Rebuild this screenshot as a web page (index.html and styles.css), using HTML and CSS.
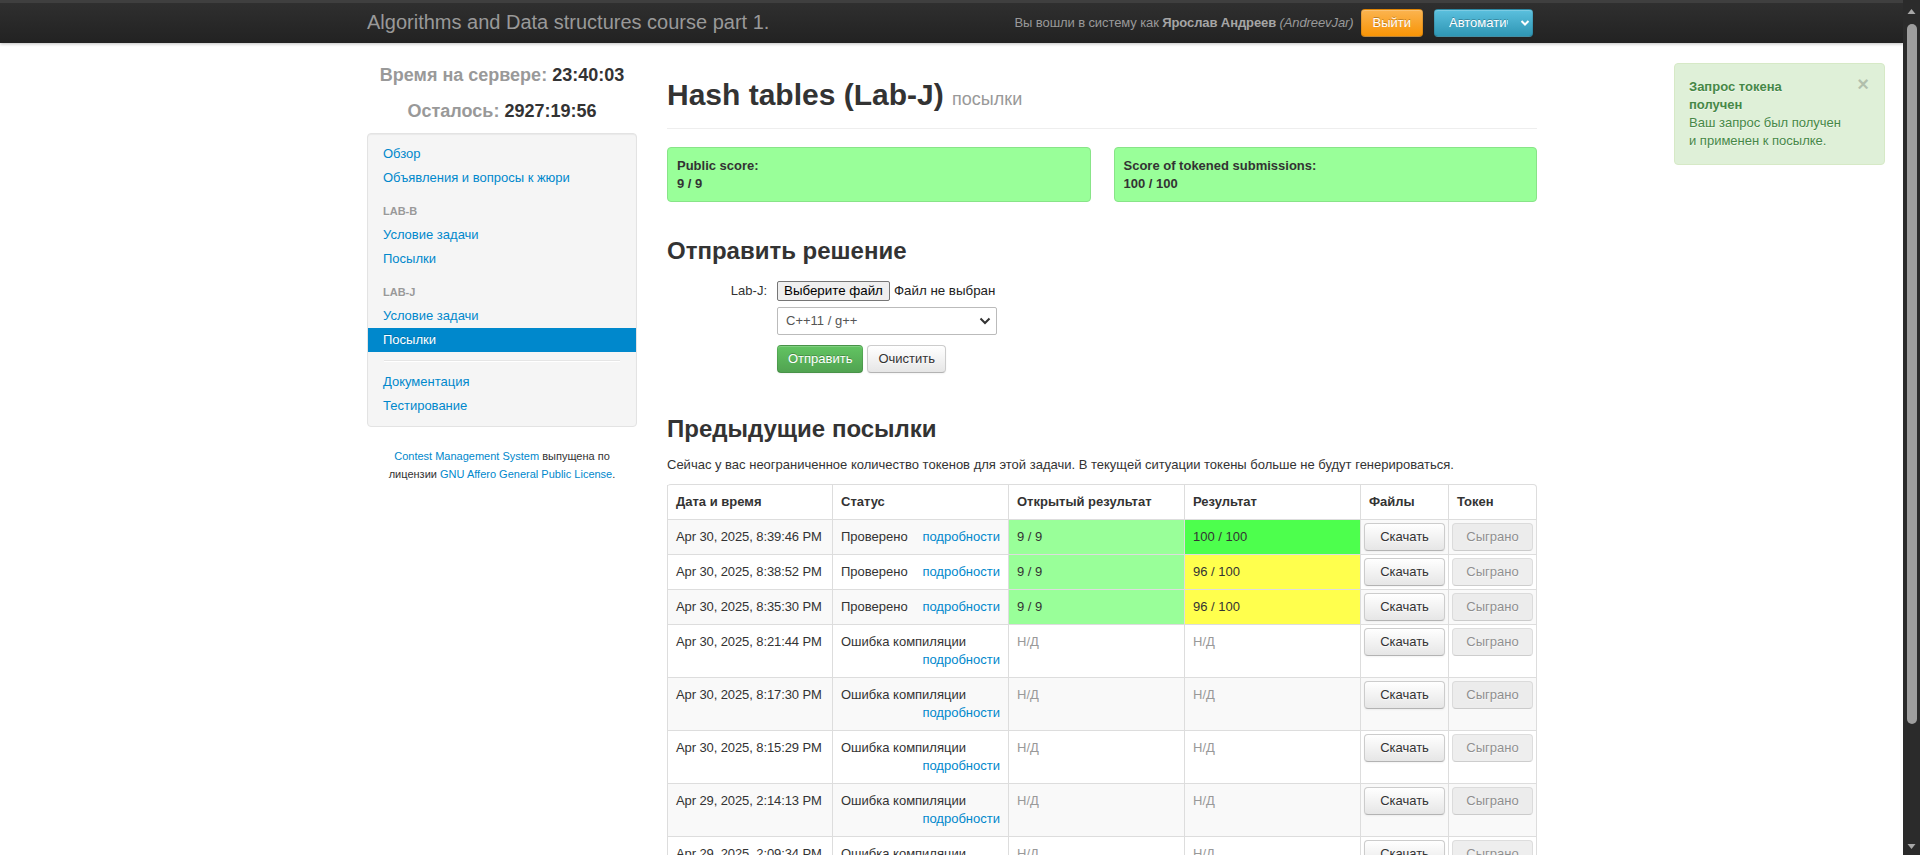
FILE: index.html
```html
<!DOCTYPE html>
<html lang="ru">
<head>
<meta charset="utf-8">
<title>Hash tables (Lab-J) посылки</title>
<link rel="stylesheet" href="styles.css">
</head>
<body>
<div class="page">
  <div class="navbar">
    <div class="nav-inner">
      <div class="brand">Algorithms and Data structures course part 1.</div>
      <div class="user">
        <span class="navtext">Вы вошли в систему как <b>Ярослав Андреев</b> <i>(AndreevJar)</i></span>
        <span class="btn btn-warning">Выйти</span>
        <span class="btn btn-info lang"><span class="lang-text">Автоматически</span><svg class="chev" width="10" height="8" viewBox="0 0 10 8"><polyline points="1.5,2 5,5.5 8.5,2" fill="none" stroke="#fff" stroke-width="2"/></svg></span>
      </div>
    </div>
  </div>

  <div class="container">
    <div class="sidebar">
      <div class="clock">Время на сервере: <span>23:40:03</span></div>
      <div class="clock">Осталось: <span>2927:19:56</span></div>
      <div class="well">
        <ul class="nav-list">
          <li><a href="#">Обзор</a></li>
          <li><a href="#">Объявления и вопросы к жюри</a></li>
          <li class="nav-header">Lab-B</li>
          <li><a href="#">Условие задачи</a></li>
          <li><a href="#">Посылки</a></li>
          <li class="nav-header">Lab-J</li>
          <li><a href="#">Условие задачи</a></li>
          <li class="active"><a href="#">Посылки</a></li>
          <li class="divider"></li>
          <li><a href="#">Документация</a></li>
          <li><a href="#">Тестирование</a></li>
        </ul>
      </div>
      <div class="copyright"><a href="#">Contest Management System</a> выпущена по лицензии <a href="#">GNU Affero General Public License</a>.</div>
    </div>

    <div class="main">
      <h1 class="title">Hash tables (Lab-J) <small>посылки</small></h1>
      <div class="scores">
        <div class="score"><b>Public score:</b><br><b>9 / 9</b></div>
        <div class="score"><b>Score of tokened submissions:</b><br><b>100 / 100</b></div>
      </div>

      <h2 class="submit-h">Отправить решение</h2>
      <div class="form">
        <div class="frow">
          <label class="flabel">Lab-J:</label>
          <span class="filebtn">Выберите файл</span><span class="filetext">Файл не выбран</span>
        </div>
        <div class="controls">
          <div class="select"><span>C++11 / g++</span><svg class="sel-chev" width="12" height="8" viewBox="0 0 12 8"><polyline points="1.5,1.5 6,6 10.5,1.5" fill="none" stroke="#333" stroke-width="2"/></svg></div>
          <div class="actions">
            <span class="btn btn-success">Отправить</span>
            <span class="btn">Очистить</span>
          </div>
        </div>
      </div>

      <h2 class="prev-h">Предыдущие посылки</h2>
      <p class="note">Сейчас у вас неограниченное количество токенов для этой задачи. В текущей ситуации токены больше не будут генерироваться.</p>

      <table class="subs">
        <thead>
          <tr>
            <th class="c-date">Дата и время</th>
            <th class="c-status">Статус</th>
            <th class="c-pub">Открытый результат</th>
            <th class="c-res">Результат</th>
            <th class="c-files">Файлы</th>
            <th class="c-token">Токен</th>
          </tr>
        </thead>
        <tbody>
          <tr>
            <td class="date">Apr 30, 2025, 8:39:46 PM</td>
            <td>Проверено <a class="det" href="#">подробности</a></td>
            <td class="pub">9 / 9</td>
            <td class="full">100 / 100</td>
            <td class="bc"><span class="btn block">Скачать</span></td>
            <td class="bc"><span class="btn block disabled">Сыграно</span></td>
          </tr>
          <tr>
            <td class="date">Apr 30, 2025, 8:38:52 PM</td>
            <td>Проверено <a class="det" href="#">подробности</a></td>
            <td class="pub">9 / 9</td>
            <td class="part">96 / 100</td>
            <td class="bc"><span class="btn block">Скачать</span></td>
            <td class="bc"><span class="btn block disabled">Сыграно</span></td>
          </tr>
          <tr>
            <td class="date">Apr 30, 2025, 8:35:30 PM</td>
            <td>Проверено <a class="det" href="#">подробности</a></td>
            <td class="pub">9 / 9</td>
            <td class="part">96 / 100</td>
            <td class="bc"><span class="btn block">Скачать</span></td>
            <td class="bc"><span class="btn block disabled">Сыграно</span></td>
          </tr>
          <tr>
            <td class="date">Apr 30, 2025, 8:21:44 PM</td>
            <td>Ошибка компиляции <a class="det" href="#">подробности</a></td>
            <td class="na">Н/Д</td>
            <td class="na">Н/Д</td>
            <td class="bc"><span class="btn block">Скачать</span></td>
            <td class="bc"><span class="btn block disabled">Сыграно</span></td>
          </tr>
          <tr>
            <td class="date">Apr 30, 2025, 8:17:30 PM</td>
            <td>Ошибка компиляции <a class="det" href="#">подробности</a></td>
            <td class="na">Н/Д</td>
            <td class="na">Н/Д</td>
            <td class="bc"><span class="btn block">Скачать</span></td>
            <td class="bc"><span class="btn block disabled">Сыграно</span></td>
          </tr>
          <tr>
            <td class="date">Apr 30, 2025, 8:15:29 PM</td>
            <td>Ошибка компиляции <a class="det" href="#">подробности</a></td>
            <td class="na">Н/Д</td>
            <td class="na">Н/Д</td>
            <td class="bc"><span class="btn block">Скачать</span></td>
            <td class="bc"><span class="btn block disabled">Сыграно</span></td>
          </tr>
          <tr>
            <td class="date">Apr 29, 2025, 2:14:13 PM</td>
            <td>Ошибка компиляции <a class="det" href="#">подробности</a></td>
            <td class="na">Н/Д</td>
            <td class="na">Н/Д</td>
            <td class="bc"><span class="btn block">Скачать</span></td>
            <td class="bc"><span class="btn block disabled">Сыграно</span></td>
          </tr>
          <tr>
            <td class="date">Apr 29, 2025, 2:09:34 PM</td>
            <td>Ошибка компиляции <a class="det" href="#">подробности</a></td>
            <td class="na">Н/Д</td>
            <td class="na">Н/Д</td>
            <td class="bc"><span class="btn block">Скачать</span></td>
            <td class="bc"><span class="btn block disabled">Сыграно</span></td>
          </tr>
        </tbody>
      </table>
    </div>
  </div>
</div>

<div class="notif">
  <span class="close">×</span>
  <b>Запрос токена<br>получен</b><br>
  Ваш запрос был получен и применен к посылке.
</div>

<div class="scrollbar">
  <svg class="sb-up" width="17" height="17" viewBox="0 0 17 17"><polygon points="4.5,11 8.5,6 12.5,11" fill="#a8a8a8"/></svg>
  <div class="sb-thumb"></div>
  <svg class="sb-down" width="17" height="17" viewBox="0 0 17 17"><polygon points="4.5,6 8.5,11 12.5,6" fill="#a8a8a8"/></svg>
</div>
</body>
</html>
```

FILE: styles.css
```css
* { box-sizing: border-box; }

html, body {
  margin: 0;
  padding: 0;
  height: 100%;
  overflow: hidden;
  background: #fff;
}

body {
  font-family: "Liberation Sans", Arial, Helvetica, sans-serif;
  font-size: 13px;
  line-height: 18px;
  color: #333;
}

a { color: #0088cc; text-decoration: none; }

.page { width: calc(100% - 16px); }

/* ---------- navbar ---------- */
.navbar {
  height: 43px;
  border-top: 3px solid #3f3f3f;
  background: linear-gradient(#2f2f2f, #222);
  box-shadow: 0 1px 3px rgba(0, 0, 0, .25);
}

.nav-inner {
  width: 1170px;
  height: 40px;
  margin: 0 auto;
  display: flex;
  align-items: center;
  justify-content: space-between;
}

.brand {
  font-size: 20px;
  line-height: 24px;
  color: #999;
  margin-top: -2px;
}

.user {
  display: flex;
  align-items: center;
  margin-right: 4px;
}

.navtext { color: #999; margin-right: 7px; letter-spacing: -0.1px; }
.navtext b { color: #a5a5a5; }

/* ---------- buttons ---------- */
.btn {
  display: inline-block;
  padding: 4px 10px;
  font-size: 13px;
  line-height: 18px;
  color: #333;
  text-align: center;
  white-space: nowrap;
  text-shadow: 0 1px 1px rgba(255, 255, 255, .75);
  background: linear-gradient(#fff, #e6e6e6);
  border: 1px solid #ccc;
  border-bottom-color: #b3b3b3;
  border-radius: 4px;
  box-shadow: inset 0 1px 0 rgba(255, 255, 255, .2), 0 1px 2px rgba(0, 0, 0, .05);
}

.btn-warning {
  color: #fff;
  padding: 4px 11px;
  text-shadow: 0 -1px 0 rgba(0, 0, 0, .25);
  background: linear-gradient(#fbb450, #f89406);
  border-color: rgba(0, 0, 0, .1) rgba(0, 0, 0, .1) rgba(0, 0, 0, .25);
}

.btn-info {
  color: #fff;
  text-shadow: 0 -1px 0 rgba(0, 0, 0, .25);
  background: linear-gradient(#5bc0de, #2f96b4);
  border-color: rgba(0, 0, 0, .1) rgba(0, 0, 0, .1) rgba(0, 0, 0, .25);
}

.btn-success {
  color: #fff;
  padding: 4px 11px;
  text-shadow: 0 -1px 0 rgba(0, 0, 0, .25);
  background: linear-gradient(#62c462, #51a351);
  border-color: rgba(0, 0, 0, .1) rgba(0, 0, 0, .1) rgba(0, 0, 0, .25);
}

.lang {
  margin-left: 11px;
  width: 99px;
  padding: 4px 0 4px 14px;
  display: flex;
  align-items: center;
}

.lang-text {
  width: 59px;
  overflow: hidden;
  white-space: nowrap;
  text-align: left;
}

.chev { margin-left: 12px; }

/* ---------- layout ---------- */
.container {
  width: 1170px;
  margin: 0 auto;
  display: flex;
  gap: 30px;
  align-items: flex-start;
}

.sidebar { width: 270px; padding-top: 19px; flex: none; }
.main { width: 870px; flex: none; }

/* ---------- sidebar ---------- */
.clock {
  font-size: 18px;
  line-height: 27px;
  font-weight: bold;
  color: #999;
  text-align: center;
  margin-bottom: 9px;
}
.clock + .clock { margin-bottom: 8px; }
.clock span { color: #333; }

.well {
  background: #f5f5f5;
  border: 1px solid #e3e3e3;
  border-radius: 4px;
  box-shadow: inset 0 1px 1px rgba(0, 0, 0, .05);
  padding: 8px 0;
}

.nav-list {
  list-style: none;
  margin: 0;
  padding: 0 15px;
}

.nav-list a {
  display: block;
  padding: 3px 15px;
  margin: 0 -15px;
  line-height: 18px;
}

.nav-list .active a {
  background: #0088cc;
  color: #fff;
  text-shadow: 0 -1px 0 rgba(0, 0, 0, .2);
}

.nav-header {
  padding: 3px 15px;
  margin: 9px -15px 0;
  font-size: 11px;
  font-weight: bold;
  line-height: 18px;
  color: #999;
  text-transform: uppercase;
  text-shadow: 0 1px 0 rgba(255, 255, 255, .5);
}

.divider {
  box-sizing: content-box;
  height: 1px;
  margin: 8px 1px;
  background: #e5e5e5;
  border-bottom: 1px solid #fff;
}

.copyright {
  margin-top: 20px;
  padding: 0 15px;
  text-align: center;
  font-size: 11px;
  line-height: 18px;
}

/* ---------- main ---------- */
.title {
  margin: 34px 0 0;
  padding-bottom: 15px;
  border-bottom: 1px solid #eee;
  font-size: 30px;
  line-height: 36px;
  font-weight: bold;
}

.title small {
  font-size: 18px;
  line-height: 1;
  font-weight: normal;
  color: #999;
}

.scores {
  display: flex;
  justify-content: space-between;
  margin-top: 18px;
}

.score {
  width: calc((100% - 23px) / 2);
  background: #99ff99;
  border: 1px solid #88e488;
  border-radius: 4px;
  padding: 9px 9px 8px;
}

h2 {
  font-size: 24px;
  line-height: 36px;
  font-weight: bold;
  margin: 0;
}

.submit-h { margin-top: 31px; }

.form { margin-top: 8px; }

.frow {
  display: flex;
  align-items: center;
  height: 28px;
}

.flabel {
  width: 100px;
  margin-right: 10px;
  text-align: right;
}

.filebtn {
  font-family: Arial, "Liberation Sans", sans-serif;
  font-size: 13.333px;
  line-height: 16px;
  padding: 1px 6px;
  color: #000;
  background: #efefef;
  border: 1px solid #767676;
  border-radius: 2px;
}

.filetext {
  font-family: Arial, "Liberation Sans", sans-serif;
  font-size: 13.333px;
  color: #222;
  margin-left: 4px;
}

.controls { margin-left: 110px; }

.select {
  margin-top: 2px;
  width: 220px;
  height: 28px;
  border: 1px solid #bbb;
  border-radius: 2px;
  background: #fff;
  color: #555;
  padding: 0 5px 0 8px;
  display: flex;
  align-items: center;
  justify-content: space-between;
}

.actions {
  margin-top: 10px;
  display: flex;
  gap: 4px;
}

.actions .btn { padding: 4px 10px; }

.prev-h { margin-top: 38px; }

.note { margin: 9px 0 10px; }

/* ---------- table ---------- */
.subs {
  width: 870px;
  table-layout: fixed;
  border-collapse: separate;
  border-spacing: 0;
  border: 1px solid #ddd;
  border-left: 0;
  border-radius: 4px;
}

.subs th, .subs td {
  padding: 8px;
  line-height: 18px;
  text-align: left;
  vertical-align: top;
  border-top: 1px solid #ddd;
  border-left: 1px solid #ddd;
}

.subs thead th { border-top: 0; font-weight: bold; }

.c-date { width: 165px; }
.c-status { width: 176px; }
.c-pub { width: 176px; }
.c-res { width: 176px; }
.c-files { width: 88px; }
.c-token { width: 88px; }

.subs tbody tr:nth-child(odd) td { background: #f9f9f9; }

.subs tbody tr td.date { white-space: nowrap; letter-spacing: -0.1px; padding-right: 0; }
.subs tbody tr td.pub { background: #99ff99; }
.subs tbody tr td.full { background: #4dff4d; }
.subs tbody tr td.part { background: #ffff4d; }
.subs tbody tr td.na { color: #999; }
.subs tbody tr td.bc { padding: 3px; }

.det { float: right; }

.btn.block { display: block; width: 100%; }

.btn.disabled {
  background: #e6e6e6;
  opacity: .65;
  box-shadow: none;
  color: #555;
}

/* ---------- notification ---------- */
.notif {
  position: fixed;
  top: 63px;
  right: 35px;
  width: 211px;
  padding: 14px 38px 14px 14px;
  background: #dff0d8;
  border: 1px solid #d6e9c6;
  border-radius: 4px;
  color: #468847;
  text-shadow: 0 1px 0 rgba(255, 255, 255, .5);
}

.notif .close {
  position: absolute;
  top: 11px;
  right: 15px;
  font-size: 20px;
  font-weight: bold;
  line-height: 18px;
  color: #000;
  opacity: .2;
}

/* ---------- fake scrollbar ---------- */
.scrollbar {
  position: fixed;
  top: 0;
  right: 0;
  width: 17px;
  height: 100%;
  background: #2b2b2b;
}

.sb-up { position: absolute; top: 3px; left: 0; }
.sb-down { position: absolute; bottom: 0; left: 0; }

.sb-thumb {
  position: absolute;
  top: 24px;
  left: 4px;
  width: 10px;
  height: 700px;
  border-radius: 5px;
  background: #9e9e9e;
}
```
